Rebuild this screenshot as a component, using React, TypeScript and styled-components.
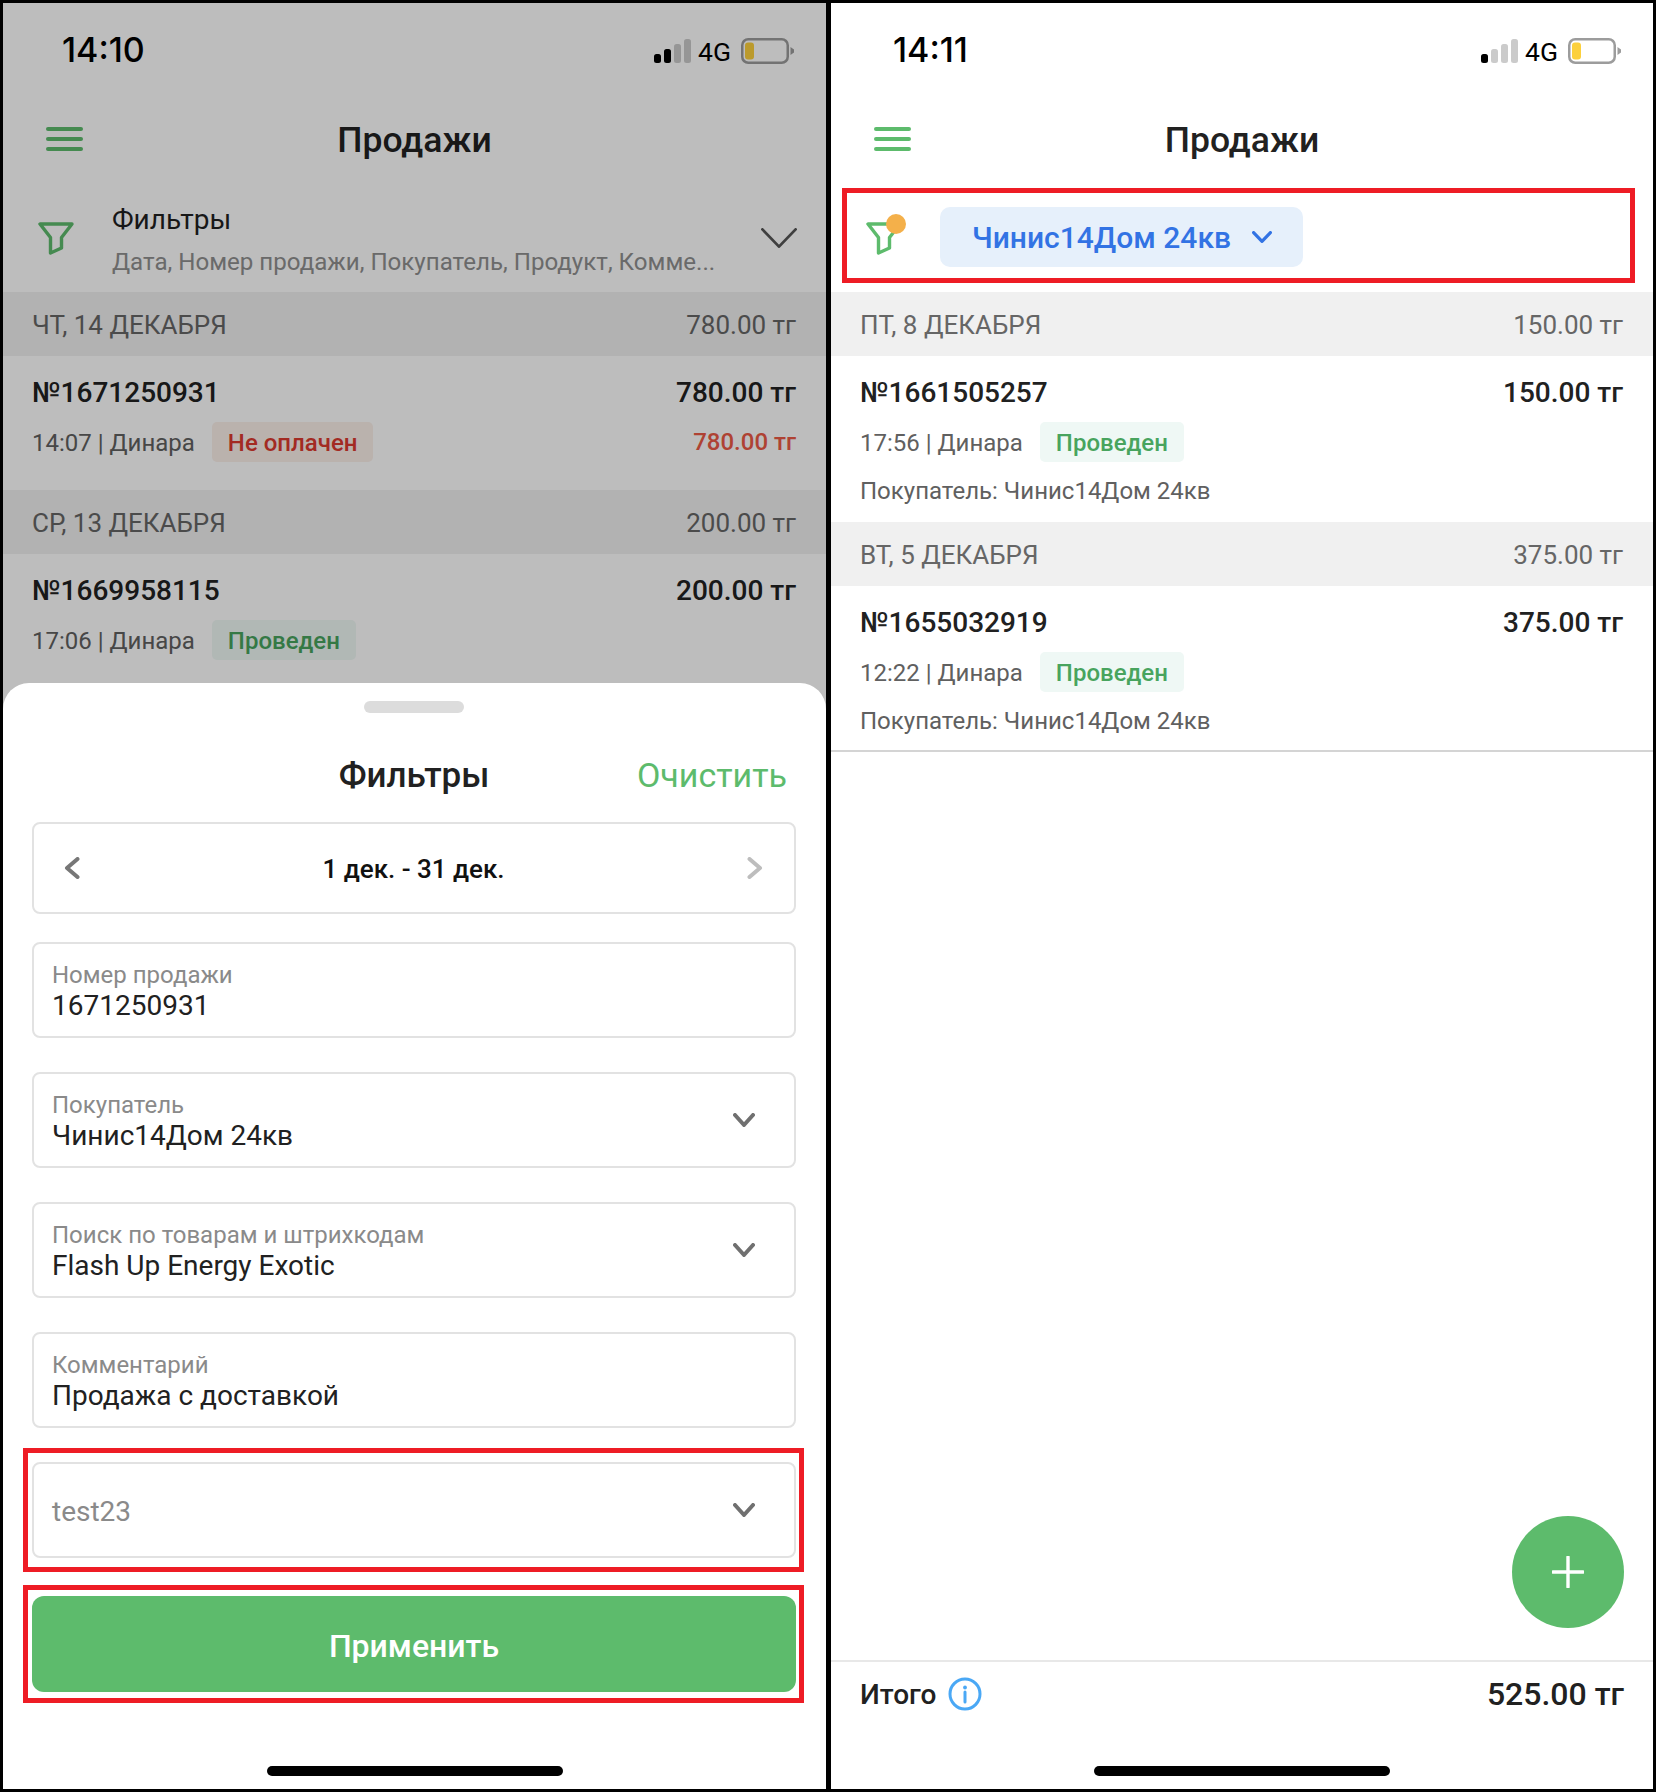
import { styled, createGlobalStyle } from 'styled-components';

const GREEN = '#5dbb6c';
const RED = '#ee1c25';

const GlobalStyle = createGlobalStyle`
  html, body {
    margin: 0;
    background: #000;
  }
  * {
    box-sizing: border-box;
  }
  body {
    font-family: Roboto, "Noto Sans", sans-serif;
    color: #1f1f1f;
  }
`;

type Sale = {
  number: string;
  time: string;
  amount: string;
  status: 'paid' | 'unpaid';
  debt?: string;
  buyer?: string;
};

type Day = {
  date: string;
  total: string;
  sales: Sale[];
};

const leftDays: Day[] = [
  {
    date: 'ЧТ, 14 ДЕКАБРЯ',
    total: '780.00 тг',
    sales: [{ number: '№1671250931', time: '14:07 | Динара', amount: '780.00 тг', status: 'unpaid', debt: '780.00 тг' }],
  },
  {
    date: 'СР, 13 ДЕКАБРЯ',
    total: '200.00 тг',
    sales: [{ number: '№1669958115', time: '17:06 | Динара', amount: '200.00 тг', status: 'paid' }],
  },
];

const rightDays: Day[] = [
  {
    date: 'ПТ, 8 ДЕКАБРЯ',
    total: '150.00 тг',
    sales: [{ number: '№1661505257', time: '17:56 | Динара', amount: '150.00 тг', status: 'paid', buyer: 'Покупатель: Чинис14Дом 24кв' }],
  },
  {
    date: 'ВТ, 5 ДЕКАБРЯ',
    total: '375.00 тг',
    sales: [{ number: '№1655032919', time: '12:22 | Динара', amount: '375.00 тг', status: 'paid', buyer: 'Покупатель: Чинис14Дом 24кв' }],
  },
];

function SignalIcon({ level }: { level: number }) {
  return (
    <svg width="37" height="24" viewBox="0 0 37 24">
      {[0, 1, 2, 3].map(i => (
        <rect
          key={i}
          x={i * 10}
          y={15 - i * 5}
          width="7"
          height={9 + i * 5}
          rx="2.5"
          fill={i < level ? '#000' : '#a8a8a8'}
          fillOpacity={i < level ? 1 : 0.6}
        />
      ))}
    </svg>
  );
}

function BatteryIcon() {
  return (
    <svg width="53" height="26" viewBox="0 0 53 26">
      <rect x="1.250" y="1.250" width="45.500" height="23.500" rx="6" fill="none" stroke="#9c9c9c" strokeWidth="2.500" />
      <rect x="4" y="4.500" width="9" height="17" rx="3" fill="#fcd03c" />
      <path d="M49.500 9L53 11.500V14.500L49.500 17Z" fill="#9c9c9c" />
    </svg>
  );
}

function FunnelIcon() {
  return (
    <svg width="36" height="34" viewBox="0 0 36 34">
      <path d="M2 3H34L23.500 16.500V27L12.500 32V16.500Z" fill="none" stroke="#5dbb6c" strokeWidth="3.400" strokeLinejoin="round" />
    </svg>
  );
}

function Chevron({ width, height, color, stroke }: { width: number; height: number; color: string; stroke: number }) {
  return (
    <svg width={width} height={height} viewBox={`0 0 ${width} ${height}`}>
      <path
        d={`M${stroke / 2} ${stroke / 2}L${width / 2} ${height - stroke / 2}L${width - stroke / 2} ${stroke / 2}`}
        fill="none"
        stroke={color}
        strokeWidth={stroke}
        strokeLinecap="round"
        strokeLinejoin="round"
      />
    </svg>
  );
}

function SideArrow({ flip, color }: { flip?: boolean; color: string }) {
  return (
    <svg width="16" height="22" viewBox="0 0 16 22" style={flip ? { transform: 'scaleX(-1)' } : undefined}>
      <path d="M13.500 2L3 11L13.500 20" fill="none" stroke={color} strokeWidth="4" strokeLinecap="round" strokeLinejoin="round" />
    </svg>
  );
}

function StatusRow({ time, level, inset }: { time: string; level: number; inset: number }) {
  return (
    <StatusBar>
      <Clock $inset={inset}>{time}</Clock>
      <StatusIcons>
        <SignalIcon level={level} />
        <Network>4G</Network>
        <BatteryIcon />
      </StatusIcons>
    </StatusBar>
  );
}

function Nav() {
  return (
    <NavBar>
      <Burger>
        <span />
        <span />
        <span />
      </Burger>
      <NavTitle>Продажи</NavTitle>
    </NavBar>
  );
}

function DayList({ days }: { days: Day[] }) {
  return (
    <>
      {days.map(day => (
        <section key={day.date}>
          <DayHeader>
            <span>{day.date}</span>
            <span>{day.total}</span>
          </DayHeader>
          {day.sales.map(sale => (
            <SaleRow key={sale.number}>
              <SaleTop>
                <span>{sale.number}</span>
                <span>{sale.amount}</span>
              </SaleTop>
              <SaleMeta>
                <MetaText>{sale.time}</MetaText>
                <Badge $status={sale.status}>{sale.status === 'paid' ? 'Проведен' : 'Не оплачен'}</Badge>
                {sale.debt && <Debt>{sale.debt}</Debt>}
              </SaleMeta>
              {sale.buyer && <Buyer>{sale.buyer}</Buyer>}
            </SaleRow>
          ))}
        </section>
      ))}
    </>
  );
}

function Field({ label, value, select }: { label: string; value: string; select?: boolean }) {
  return (
    <FieldBox>
      <FieldTexts>
        <FieldLabel>{label}</FieldLabel>
        <FieldValue>{value}</FieldValue>
      </FieldTexts>
      {select && <Chevron width={22} height={14} color="#707070" stroke={4} />}
    </FieldBox>
  );
}

export default function App() {
  return (
    <>
      <GlobalStyle />
      <Frame>
        <Panel>
          <StatusRow time="14:10" level={2} inset={59} />
          <Nav />
          <FilterSummary>
            <FunnelIcon />
            <FilterTexts>
              <FilterTitle>Фильтры</FilterTitle>
              <FilterHint>Дата, Номер продажи, Покупатель, Продукт, Комме...</FilterHint>
            </FilterTexts>
            <Chevron width={36} height={20} color="#555" stroke={2.8} />
          </FilterSummary>
          <DayList days={leftDays} />
          <Dim />
          <Sheet>
            <Handle />
            <SheetHead>
              <SheetTitle>Фильтры</SheetTitle>
              <ClearLink>Очистить</ClearLink>
            </SheetHead>
            <DateBox>
              <SideArrow color="#777" />
              <DateText>1 дек. - 31 дек.</DateText>
              <SideArrow flip color="#bdbdbd" />
            </DateBox>
            <Fields>
              <Field label="Номер продажи" value="1671250931" />
              <Field label="Покупатель" value="Чинис14Дом 24кв" select />
              <Field label="Поиск по товарам и штрихкодам" value="Flash Up Energy Exotic" select />
              <Field label="Комментарий" value="Продажа с доставкой" />
            </Fields>
            <SheetMark $top={20} $pad={9}>
              <FieldBox>
                <Placeholder>test23</Placeholder>
                <Chevron width={22} height={14} color="#707070" stroke={4} />
              </FieldBox>
            </SheetMark>
            <SheetMark $top={13} $pad={6}>
              <ApplyButton>Применить</ApplyButton>
            </SheetMark>
            <HomeBar />
          </Sheet>
        </Panel>

        <Panel>
          <StatusRow time="14:11" level={1} inset={62} />
          <Nav />
          <FilterStrip>
            <FilterMark>
              <FunnelWrap>
                <FunnelIcon />
                <FunnelDot />
              </FunnelWrap>
              <BuyerChip>
                Чинис14Дом 24кв
                <Chevron width={20} height={12} color="#3273e4" stroke={3.2} />
              </BuyerChip>
            </FilterMark>
          </FilterStrip>
          <DayList days={rightDays} />
          <ListEnd />
          <Spacer />
          <AddButton>
            <svg width="32" height="32" viewBox="0 0 32 32">
              <path d="M16 1V31M1 16H31" stroke="#fff" strokeWidth="3.400" strokeLinecap="round" />
            </svg>
          </AddButton>
          <Totals>
            <TotalLabel>
              Итого
              <svg width="34" height="34" viewBox="0 0 34 34">
                <circle cx="17" cy="17" r="15" fill="none" stroke="#4aa8f5" strokeWidth="3" />
                <circle cx="17" cy="10.500" r="1.900" fill="#4aa8f5" />
                <path d="M17 15V25" stroke="#4aa8f5" strokeWidth="3" strokeLinecap="round" />
              </svg>
            </TotalLabel>
            <TotalValue>525.00 тг</TotalValue>
          </Totals>
          <HomeBar />
        </Panel>
      </Frame>
    </>
  );
}

const Frame = styled.div`
  width: 1656px;
  height: 1792px;
  padding: 3px;
  display: grid;
  grid-template-columns: 823px 822px;
  gap: 5px;
  background: #000;
`;

const Panel = styled.div`
  position: relative;
  display: flex;
  flex-direction: column;
  overflow: hidden;
  background: #fff;
`;

const StatusBar = styled.div`
  height: 96px;
  flex: none;
  display: flex;
  align-items: center;
  justify-content: space-between;
  padding-right: 32px;
`;

const Clock = styled.div<{ $inset: number }>`
  margin: -4px 0 0 ${p => p.$inset}px;
  font-family: Inter, Roboto, sans-serif;
  font-size: 34px;
  font-weight: 500;
  color: #000;
`;

const StatusIcons = styled.div`
  display: flex;
  align-items: center;
`;

const Network = styled.div`
  margin: 0 10px 0 7px;
  font-size: 26.500px;
  color: #000;
`;

const NavBar = styled.div`
  height: 82px;
  flex: none;
  position: relative;
  display: flex;
  align-items: center;
  justify-content: center;
`;

const Burger = styled.div`
  position: absolute;
  left: 43px;
  top: 28px;
  width: 37px;
  height: 24px;
  display: flex;
  flex-direction: column;
  justify-content: space-between;

  span {
    height: 4px;
    border-radius: 2px;
    background: ${GREEN};
  }
`;

const NavTitle = styled.div`
  font-size: 35.500px;
  font-weight: 500;
  color: #212121;
`;

const FilterSummary = styled.div`
  height: 111px;
  flex: none;
  display: flex;
  align-items: center;
  padding: 2px 29px 0 35px;

  > svg:last-child {
    flex: none;
  }
`;

const FilterTexts = styled.div`
  flex: 1;
  margin-left: 38px;
  padding-top: 7px;
`;

const FilterTitle = styled.div`
  font-size: 28px;
  line-height: 32px;
  color: #1f1f1f;
`;

const FilterHint = styled.div`
  margin-top: 10px;
  font-size: 24.100px;
  line-height: 32px;
  color: #8f8f8f;
  white-space: nowrap;
`;

const DayHeader = styled.div`
  height: 64px;
  padding: 2px 30px 0 29px;
  display: flex;
  align-items: center;
  justify-content: space-between;
  background: #f0f0f0;
  font-size: 26px;
  color: #666;
`;

const SaleRow = styled.div`
  padding: 20px 30px 15px 29px;
`;

const SaleTop = styled.div`
  height: 32px;
  margin-bottom: 14px;
  display: flex;
  align-items: center;
  justify-content: space-between;
  font-size: 28px;
  font-weight: 500;
  color: #212121;
`;

const SaleMeta = styled.div`
  height: 40px;
  margin-bottom: 13px;
  display: flex;
  align-items: center;
`;

const MetaText = styled.span`
  padding-top: 2px;
  font-size: 24px;
  color: #606060;
`;

const Badge = styled.span<{ $status: 'paid' | 'unpaid' }>`
  height: 40px;
  margin-left: 17px;
  padding: 2px 16px 0;
  display: inline-flex;
  align-items: center;
  border-radius: 5px;
  font-size: 24px;
  font-weight: 500;
  color: ${p => (p.$status === 'paid' ? '#48a45e' : '#dc392e')};
  background: ${p => (p.$status === 'paid' ? '#eff8f5' : '#fbf0ea')};
`;

const Debt = styled.span`
  margin-left: auto;
  font-size: 24px;
  font-weight: 500;
  color: #ec5a45;
`;

const Buyer = styled.div`
  height: 32px;
  display: flex;
  align-items: center;
  font-size: 24px;
  color: #606060;
`;

const Dim = styled.div`
  position: absolute;
  inset: 0;
  background: rgba(0, 0, 0, 0.26);
`;

const Sheet = styled.div`
  position: absolute;
  left: 0;
  right: 0;
  bottom: 0;
  height: 1106px;
  display: flex;
  flex-direction: column;
  padding: 18px 30px 0 29px;
  border-radius: 26px 26px 0 0;
  background: #fff;
`;

const Handle = styled.div`
  width: 100px;
  height: 12px;
  flex: none;
  align-self: center;
  border-radius: 6px;
  background: #dcdcdc;
`;

const SheetHead = styled.div`
  position: relative;
  height: 60px;
  margin-top: 32px;
  flex: none;
  display: flex;
  align-items: center;
  justify-content: center;
`;

const SheetTitle = styled.div`
  font-size: 35px;
  font-weight: 500;
  color: #212121;
`;

const ClearLink = styled.div`
  position: absolute;
  right: 9px;
  font-size: 34px;
  color: ${GREEN};
`;

const DateBox = styled.div`
  height: 92px;
  margin-top: 17px;
  flex: none;
  display: flex;
  align-items: center;
  justify-content: space-between;
  padding: 0 31px 0 30px;
  border: 2px solid #e2e2e2;
  border-radius: 8px;
`;

const DateText = styled.div`
  padding-top: 2px;
  font-size: 26px;
  font-weight: 500;
  color: #111;
`;

const Fields = styled.div`
  margin-top: 28px;
  display: flex;
  flex-direction: column;
  gap: 34px;
`;

const FieldBox = styled.div`
  height: 96px;
  flex: none;
  display: flex;
  align-items: center;
  justify-content: space-between;
  padding: 0 39px 0 18px;
  border: 2px solid #e2e2e2;
  border-radius: 8px;
`;

const FieldTexts = styled.div`
  padding-top: 1px;
`;

const FieldLabel = styled.div`
  font-size: 24px;
  line-height: 28px;
  color: #8a8a8a;
`;

const FieldValue = styled.div`
  margin-top: 2px;
  font-size: 28px;
  line-height: 30px;
  color: #212121;
`;

const Placeholder = styled.div`
  padding-top: 2px;
  font-size: 28px;
  color: #8a8a8a;
`;

const SheetMark = styled.div<{ $top: number; $pad: number }>`
  margin: ${p => p.$top}px -8px 0 -9px;
  padding: ${p => p.$pad}px 3px ${p => p.$pad}px 4px;
  flex: none;
  border: 5px solid ${RED};
`;

const ApplyButton = styled.button`
  width: 100%;
  height: 96px;
  display: block;
  padding-top: 5px;
  border: 0;
  border-radius: 12px;
  background: ${GREEN};
  font-family: Roboto, sans-serif;
  font-size: 32px;
  font-weight: 500;
  color: #fff;
`;

const HomeBar = styled.div`
  position: absolute;
  left: 50%;
  bottom: 13px;
  width: 296px;
  height: 10px;
  margin-left: -148px;
  border-radius: 5px;
  background: #000;
`;

const FilterStrip = styled.div`
  height: 111px;
  flex: none;
  padding: 7px 18px 9px 11px;
`;

const FilterMark = styled.div`
  height: 95px;
  display: flex;
  align-items: center;
  padding: 3px 0 0 19px;
  border: 5px solid ${RED};
`;

const FunnelWrap = styled.div`
  position: relative;
  width: 36px;
  height: 34px;
  margin-top: 1px;
`;

const FunnelDot = styled.div`
  position: absolute;
  left: 20px;
  top: -7px;
  width: 20px;
  height: 20px;
  border-radius: 50%;
  background: #f4b04a;
`;

const BuyerChip = styled.div`
  width: 363px;
  height: 60px;
  margin-left: 38px;
  display: flex;
  align-items: center;
  gap: 21px;
  padding-left: 32px;
  border-radius: 10px;
  background: #e6f0fb;
  font-size: 30px;
  font-weight: 500;
  color: #3273e4;
`;

const ListEnd = styled.div`
  height: 2px;
  margin-top: -2px;
  flex: none;
  background: #d4d4d4;
`;

const Spacer = styled.div`
  flex: 1;
`;

const AddButton = styled.div`
  position: absolute;
  right: 29px;
  bottom: 161px;
  width: 112px;
  height: 112px;
  display: flex;
  align-items: center;
  justify-content: center;
  border-radius: 50%;
  background: ${GREEN};
`;

const Totals = styled.div`
  height: 129px;
  flex: none;
  display: flex;
  align-items: flex-start;
  justify-content: space-between;
  padding: 12px 29px 0 29px;
  border-top: 2px solid #e8e8e8;
`;

const TotalLabel = styled.div`
  height: 40px;
  display: flex;
  align-items: center;
  gap: 12px;
  font-size: 28px;
  font-weight: 500;
  color: #212121;
`;

const TotalValue = styled.div`
  height: 40px;
  line-height: 40px;
  font-size: 32px;
  font-weight: 500;
  color: #212121;
`;
